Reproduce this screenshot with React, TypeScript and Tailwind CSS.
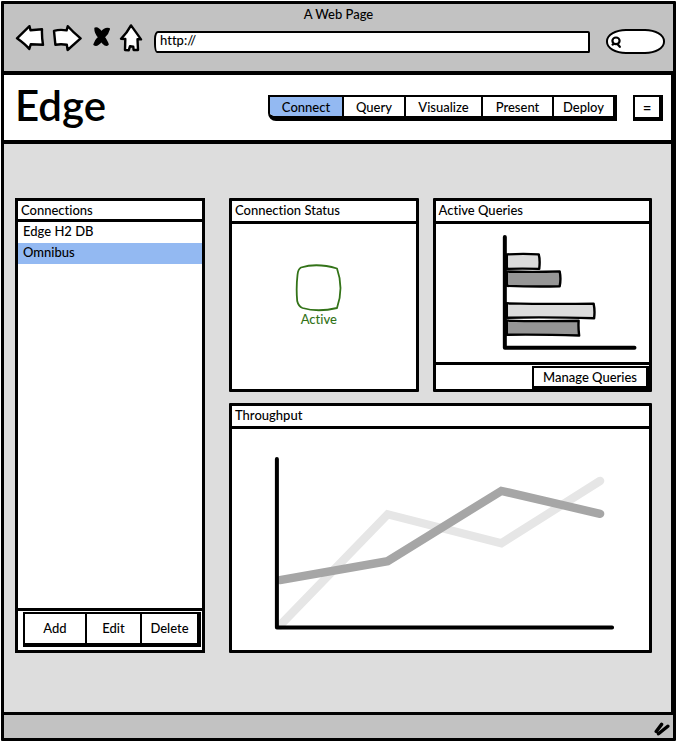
import type { ReactNode } from 'react';

const tabs = [
  { label: 'Connect', width: 'w-[74px]', active: true },
  { label: 'Query', width: 'w-[62px]', active: false },
  { label: 'Visualize', width: 'w-[77px]', active: false },
  { label: 'Present', width: 'w-[71px]', active: false },
  { label: 'Deploy', width: 'w-[59px]', active: false },
];

const connections = [
  { name: 'Edge H2 DB', selected: false },
  { name: 'Omnibus', selected: true },
];

function Panel({ title, children }: { title: string; children: ReactNode }) {
  return (
    <section className="flex min-w-0 flex-col rounded-[1px] border-[3px] border-black bg-white">
      <h2 className="h-[23px] border-b-[3px] border-black px-[3px] leading-[19px]">{title}</h2>
      {children}
    </section>
  );
}

function BrowserBar() {
  return (
    <header className="border-b-[4px] border-black bg-[#c2c2c2] pb-[17px]">
      <p className="h-5 text-center leading-5">A Web Page</p>
      <div className="flex items-center pr-2 pl-[11px]">
        <button type="button" aria-label="Back">
          <svg className="block" width="30" height="28" viewBox="15 24 30 28" fill="white" stroke="black" strokeWidth="2.4" strokeLinejoin="round">
            <path d="M17 37.3 L29.5 25.2 L30.5 29.3 L42 28.3 Q41.7 36 43 43.8 L30.8 43.2 L29.3 48 Q25 43 17 37.3Z" />
          </svg>
        </button>
        <button type="button" aria-label="Forward" className="ml-[7px]">
          <svg className="block" width="31" height="28" viewBox="52 24 31 28" fill="white" stroke="black" strokeWidth="2.4" strokeLinejoin="round">
            <path d="M54 29.8 Q60 28.2 66.6 29.4 L67.8 25.2 Q73 31 80.6 37.4 L67.6 49 L66.8 43.8 Q61 42.8 55.4 43.8Z" />
          </svg>
        </button>
        <button type="button" aria-label="Stop" className="ml-[9px]">
          <svg className="block" width="20" height="28" viewBox="92 24 20 28" fill="black" stroke="black" strokeWidth="2" strokeLinejoin="round">
            <path d="M95.3 27.5 Q98 26.5 101.3 31.5 Q105.5 26.5 109 28 Q108.2 32 104 36 Q107 41 107.8 43.3 Q105.5 45.5 101.3 40 Q97 45.5 94.3 43.5 Q95.2 40 99 36 Q95.2 32 95.3 27.5Z" />
          </svg>
        </button>
        <button type="button" aria-label="Home" className="ml-[7px]">
          <svg className="block" width="24" height="30" viewBox="118 23 24 30" fill="white" stroke="black" strokeWidth="2.4" strokeLinejoin="round">
            <path d="M130 24.4 Q135.5 32 140 38.4 L136.5 38.2 L137 49 L132.6 49 L132.3 45.8 L129 45.2 L127.8 49.2 L124 49 L124.3 38 L120 37.8 Q126 32 130 24.4Z" />
          </svg>
        </button>
        <input
          aria-label="Address"
          defaultValue="http://"
          className="mt-[5px] ml-[11px] h-[22px] min-w-0 flex-1 rounded-[4px_2px_1px_3px/8px_2px_2px_9px] border-2 border-black bg-white px-1 pb-[3px] outline-none"
        />
        <div className="mt-[5px] ml-4 flex h-[25px] w-[59px] items-center rounded-[20px/12px] border-2 border-black bg-white pl-[2px]">
          <svg className="shrink-0" width="12" height="12" viewBox="0 0 12 12" fill="none" stroke="black" strokeWidth="2.2" strokeLinecap="round" aria-hidden="true">
            <ellipse cx="6" cy="4.8" rx="3.6" ry="3.3" />
            <path d="M7.4 8 L9.8 10.8 M3 8.4 L2.6 8.6" />
          </svg>
          <input type="text" aria-label="Search" className="h-5 w-full min-w-0 bg-transparent leading-5 outline-none" />
        </div>
      </div>
    </header>
  );
}

function ActiveQueriesChart() {
  return (
    <svg className="block h-auto w-full" viewBox="436 224 214 138" role="img" aria-label="Active queries bar chart">
      <g stroke="black" strokeWidth="2.4" strokeLinejoin="round">
        <path fill="#dcdcdc" d="M507 254.5 Q524 253.5 539 254.5 Q540.5 260 539.5 269 Q522 268.5 507 269Z" />
        <path fill="#969696" d="M507 271.5 Q532 272.5 560 271.5 Q561.5 279 560 286.5 Q530 287 507 286Z" />
        <path fill="#dcdcdc" d="M507 303.5 Q550 304.5 594 303.8 Q595.5 311 594.5 318.5 Q545 317 507 318Z" />
        <path fill="#969696" d="M507 320.8 Q535 321.8 579 321 Q578.5 328 579.5 335.8 Q540 334.5 507 335Z" />
      </g>
      <path d="M505 237 V348 H635" fill="none" stroke="black" strokeWidth="4" strokeLinecap="round" strokeLinejoin="round" />
    </svg>
  );
}

function ThroughputChart() {
  return (
    <svg className="block h-auto w-full" viewBox="232 429 418 222" role="img" aria-label="Throughput line chart">
      <g fill="none" strokeLinecap="round" strokeWidth="8.4">
        <path stroke="#e6e6e6" d="M280 626 L388 514.5 L502 543.5 L601 481" />
        <path stroke="#a6a6a6" d="M280 580.5 L388 561.5 L502 491 L601 514" />
      </g>
      <path d="M277 459 V628 H613" fill="none" stroke="black" strokeWidth="4" strokeLinecap="round" strokeLinejoin="round" />
    </svg>
  );
}

export default function App() {
  return (
    <div className="flex min-h-screen flex-col bg-white pt-px pr-[2px] pb-px pl-px font-['Lato',sans-serif] text-[13px] font-medium text-black [font-variant-ligatures:none]">
      <div className="flex flex-1 flex-col rounded-[1px] border-[3px] border-black bg-[#ddd]">
        <BrowserBar />

        <div className="flex items-center border-r-2 border-b-[4px] border-black bg-white pr-2 pl-[11px]">
          <h1 className="h-[65px] flex-1 text-[42px] leading-[60px] font-semibold">Edge</h1>
          <nav className="mt-px flex overflow-hidden rounded-bl-[8px] border-2 border-r-[4px] border-b-[5px] border-black">
            {tabs.map((tab) => (
              <button
                key={tab.label}
                type="button"
                className={`${tab.width} h-[19px] border-r-2 border-black pt-px leading-[18px] last:border-r-0 ${tab.active ? 'bg-[#93b9f2]' : 'bg-white'}`}
              >
                {tab.label}
              </button>
            ))}
          </nav>
          <button type="button" aria-label="Menu" className="mt-px ml-4 h-[26px] w-[30px] border-2 border-r-[4px] border-b-[4px] border-black text-[15px] leading-5">
            =
          </button>
        </div>

        <main className="flex flex-1 items-start gap-6 border-r-2 border-black pt-[54px] pr-[19px] pb-[59px] pl-[11px]">
          <section className="flex w-[190px] shrink-0 flex-col self-stretch border-[3px] border-black bg-white">
            <h2 className="h-[21px] border-b-[3px] border-black px-[3px] leading-[18px]">Connections</h2>
            <ul className="flex-1">
              {connections.map((connection) => (
                <li key={connection.name}>
                  <button
                    type="button"
                    className={`block h-[21px] w-full px-[5px] pb-[3px] text-left leading-[18px] ${connection.selected ? 'bg-[#93b9f2]' : 'bg-white'}`}
                  >
                    {connection.name}
                  </button>
                </li>
              ))}
            </ul>
            <div className="border-t-[3px] border-black pt-px pr-px pb-[3px] pl-[5px]">
              <div className="flex border-2 border-r-[4px] border-b-[4px] border-black">
                <button type="button" className="h-[29px] w-[62px] border-r-2 border-black">Add</button>
                <button type="button" className="h-[29px] w-[55px] border-r-2 border-black">Edit</button>
                <button type="button" className="h-[29px] flex-1">Delete</button>
              </div>
            </div>
          </section>

          <div className="flex min-w-0 flex-1 flex-col gap-[11px]">
            <div className="grid grid-cols-[190fr_220fr] gap-[14px]">
              <Panel title="Connection Status">
                <div className="flex flex-1 flex-col items-center pt-[39px] pr-[10px] text-[#337318]">
                  <svg className="block" width="48" height="49" viewBox="295 263 48 49" fill="none" stroke="currentColor" strokeWidth="1.8" strokeLinejoin="round">
                    <path d="M301 267.5 Q317 262.5 337 268.5 Q344 288 337 308 Q318 312.5 302.5 308 Q298.5 306.5 297.2 301 Q296 288 297.5 275 Q298 269 301 267.5Z" />
                  </svg>
                  <span className="leading-[14px]">Active</span>
                </div>
              </Panel>
              <Panel title="Active Queries">
                <ActiveQueriesChart />
                <div className="flex justify-end border-t-[3px] border-black pt-px">
                  <button type="button" className="h-[23px] w-[117px] border-2 border-r-[3px] border-b-[3px] border-black">Manage Queries</button>
                </div>
              </Panel>
            </div>
            <Panel title="Throughput">
              <ThroughputChart />
            </Panel>
          </div>
        </main>

        <footer className="flex h-[26px] items-center justify-end border-t-[3px] border-black bg-[#c2c2c2] pr-[3px]">
          <svg className="mt-1" width="16" height="14" viewBox="0 0 16 14" stroke="black" strokeWidth="3.4" strokeLinecap="round" aria-hidden="true">
            <path d="M2.2 9.5 L7.6 2.4 M4.5 11.8 L13.8 4.2" />
          </svg>
        </footer>
      </div>
    </div>
  );
}
